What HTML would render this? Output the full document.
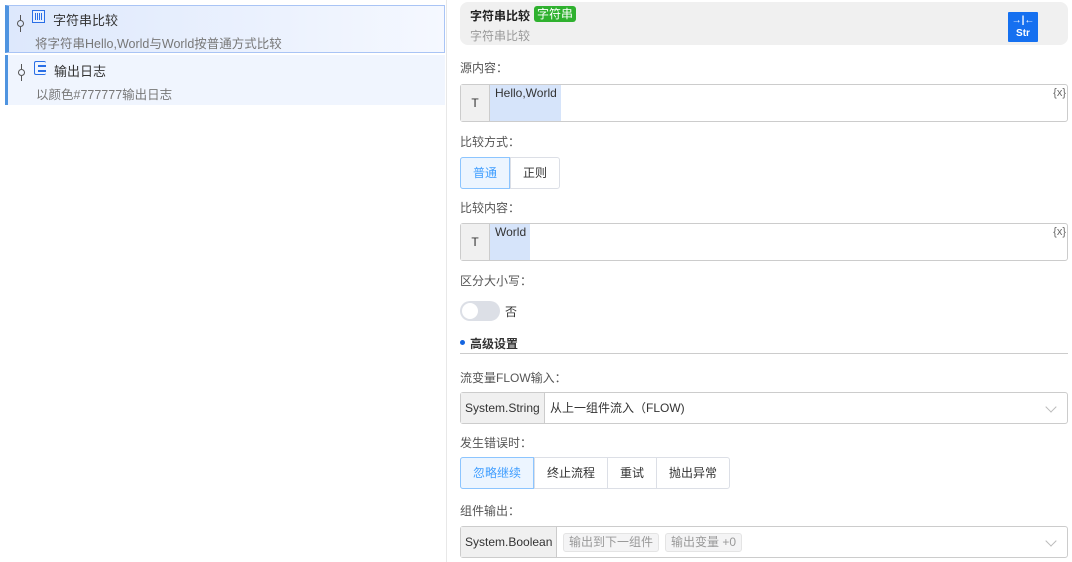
<!DOCTYPE html>
<html><head><meta charset="utf-8"><style>
*{box-sizing:border-box;margin:0;padding:0}
body{width:1072px;height:562px;background:#fff;font-family:"Liberation Sans","Noto Sans CJK SC",sans-serif;font-size:12px;color:#333;position:relative;overflow:hidden}
.a{position:absolute}
.item{position:absolute;left:5px;width:440px}
.lbl{position:absolute;left:460px;font-size:12px;color:#555}
.box{position:absolute;left:460px;width:608px;border:1px solid #ccc;border-radius:3px;background:#fff}
.btns{position:absolute;left:460px;display:flex;border:1px solid #dcdfe6;border-radius:3px;height:32px}
.btns div{padding:0 12px;line-height:30px;border-left:1px solid #dcdfe6;font-size:12px;color:#333}
.btns div:first-child{border-left:none;background:#ecf5ff;color:#409eff;border:1px solid #8cc5ff;margin:-1px 0 -1px -1px;line-height:30px;border-radius:3px 0 0 3px}
.pre{position:absolute;left:0;top:0;bottom:0;background:#f0f0f0;border-right:1px solid #ccc;line-height:30px;padding:0 4px;color:#333}
.chev{position:absolute;right:12px;top:10px;width:8px;height:8px;border-right:1px solid #bbb;border-bottom:1px solid #bbb;transform:rotate(45deg)}
.pl{position:absolute;width:1px;background:#555}
.pc{position:absolute;width:7px;height:7px;border:1px solid #555;border-radius:50%;background:transparent}
</style></head><body>
<div class="a" style="left:446px;top:0;width:1px;height:562px;background:#e8e8e8"></div>

<div class="item" style="top:5px;height:48px;background:linear-gradient(90deg,#dde8fc,#f5f8ff);border:1px solid #a9c4f5;border-left:4px solid #4f94e0"></div>
<div class="pl" style="left:20px;top:15px;height5px;height:5px"></div>
<div class="pc" style="left:17px;top:20px"></div>
<div class="pl" style="left:20px;top:27px;height:5px"></div>
<div class="a" style="left:32px;top:10px;width:13px;height:13px;border:1px solid #2a6fe6;background:#e7f0ff"><div style="margin:2px;height:7px;background:repeating-linear-gradient(90deg,#2a6fe6 0 1px,transparent 1px 2px)"></div></div>
<div class="a" style="left:53px;top:10px;font-size:13px;color:#333">字符串比较</div>
<div class="a" style="left:35px;top:33px;font-size:12.5px;color:#777">将字符串Hello,World与World按普通方式比较</div>

<div class="item" style="top:55px;height:50px;background:#f0f5fe;border-left:3px solid #4f94e0"></div>
<div class="pl" style="left:21px;top:64px;height:5px"></div>
<div class="pc" style="left:18px;top:69px"></div>
<div class="pl" style="left:21px;top:76px;height:5px"></div>
<div class="a" style="left:34px;top:61px;width:12px;height:14px;border:1.5px solid #2a6fe6;border-right:none;border-radius:2px"></div>
<div class="a" style="left:38px;top:65px;width:8px;height:1.5px;background:#2a6fe6"></div>
<div class="a" style="left:38px;top:70px;width:8px;height:1.5px;background:#2a6fe6"></div>
<div class="a" style="left:54px;top:61px;font-size:13px;color:#333">输出日志</div>
<div class="a" style="left:36px;top:84px;font-size:12.5px;color:#777">以颜色#777777输出日志</div>

<div class="a" style="left:460px;top:2px;width:608px;height:43px;background:#f0f0f0;border-radius:8px"></div>
<div class="a" style="left:470px;top:7px;font-size:12px;font-weight:bold;color:#222">字符串比较</div>
<div class="a" style="left:534px;top:6px;height:16px;padding:0 3px;background:#2fb12f;color:#fff;border-radius:3px;font-size:12px;line-height:16px">字符串</div>
<div class="a" style="left:470px;top:27px;font-size:12px;color:#999">字符串比较</div>
<div class="a" style="left:1008px;top:12px;width:30px;height:30px;background:#1570f0;border-radius:1px;color:#fff;font-size:10px;font-weight:bold;text-align:center;line-height:13px;padding-top:2px">→|←<br>Str</div>

<div class="lbl" style="top:59px">源内容：</div>
<div class="box" style="top:84px;height:38px"><div class="pre" style="width:29px;text-align:center;line-height:36px">T</div><div class="a" style="left:29px;top:0;width:71px;height:36px;background:#d6e4fa;padding:1px 5px;color:#333">Hello,World</div><div class="a" style="right:1px;top:2px;color:#666;font-size:11px">{x}</div></div>

<div class="lbl" style="top:133px">比较方式：</div>
<div class="btns" style="top:157px"><div>普通</div><div>正则</div></div>

<div class="lbl" style="top:199px">比较内容：</div>
<div class="box" style="top:223px;height:38px"><div class="pre" style="width:29px;text-align:center;line-height:36px">T</div><div class="a" style="left:29px;top:0;width:40px;height:36px;background:#d6e4fa;padding:1px 5px;color:#333">World</div><div class="a" style="right:1px;top:2px;color:#666;font-size:11px">{x}</div></div>

<div class="lbl" style="top:272px">区分大小写：</div>
<div class="a" style="left:460px;top:301px;width:40px;height:20px;border-radius:10px;background:#dcdfe6"><div style="margin:2px;width:16px;height:16px;border-radius:50%;background:#fff"></div></div>
<div class="a" style="left:505px;top:303px;font-size:12px">否</div>

<div class="a" style="left:460px;top:340px;width:5px;height:5px;border-radius:50%;background:#1565e0"></div>
<div class="a" style="left:470px;top:335px;font-size:12px;font-weight:bold;color:#333">高级设置</div>
<div class="a" style="left:460px;top:353px;width:608px;height:1px;background:#ccc"></div>

<div class="lbl" style="top:369px">流变量FLOW输入：</div>
<div class="box" style="top:392px;height:32px"><div class="pre">System.String</div><div class="a" style="left:89px;top:0;line-height:30px;color:#333">从上一组件流入（FLOW)</div><div class="chev"></div></div>

<div class="lbl" style="top:434px">发生错误时：</div>
<div class="btns" style="top:457px"><div>忽略继续</div><div>终止流程</div><div>重试</div><div>抛出异常</div></div>

<div class="lbl" style="top:502px">组件输出：</div>
<div class="box" style="top:526px;height:32px"><div class="pre">System.Boolean</div>
<div class="a" style="left:102px;top:6px;height:19px;padding:0 5px;background:#f4f4f5;border:1px solid #e4e4e4;border-radius:3px;color:#999;line-height:17px">输出到下一组件</div>
<div class="a" style="left:204px;top:6px;height:19px;padding:0 5px;background:#f4f4f5;border:1px solid #e4e4e4;border-radius:3px;color:#999;line-height:17px">输出变量 +0</div><div class="chev"></div></div>
</body></html>
